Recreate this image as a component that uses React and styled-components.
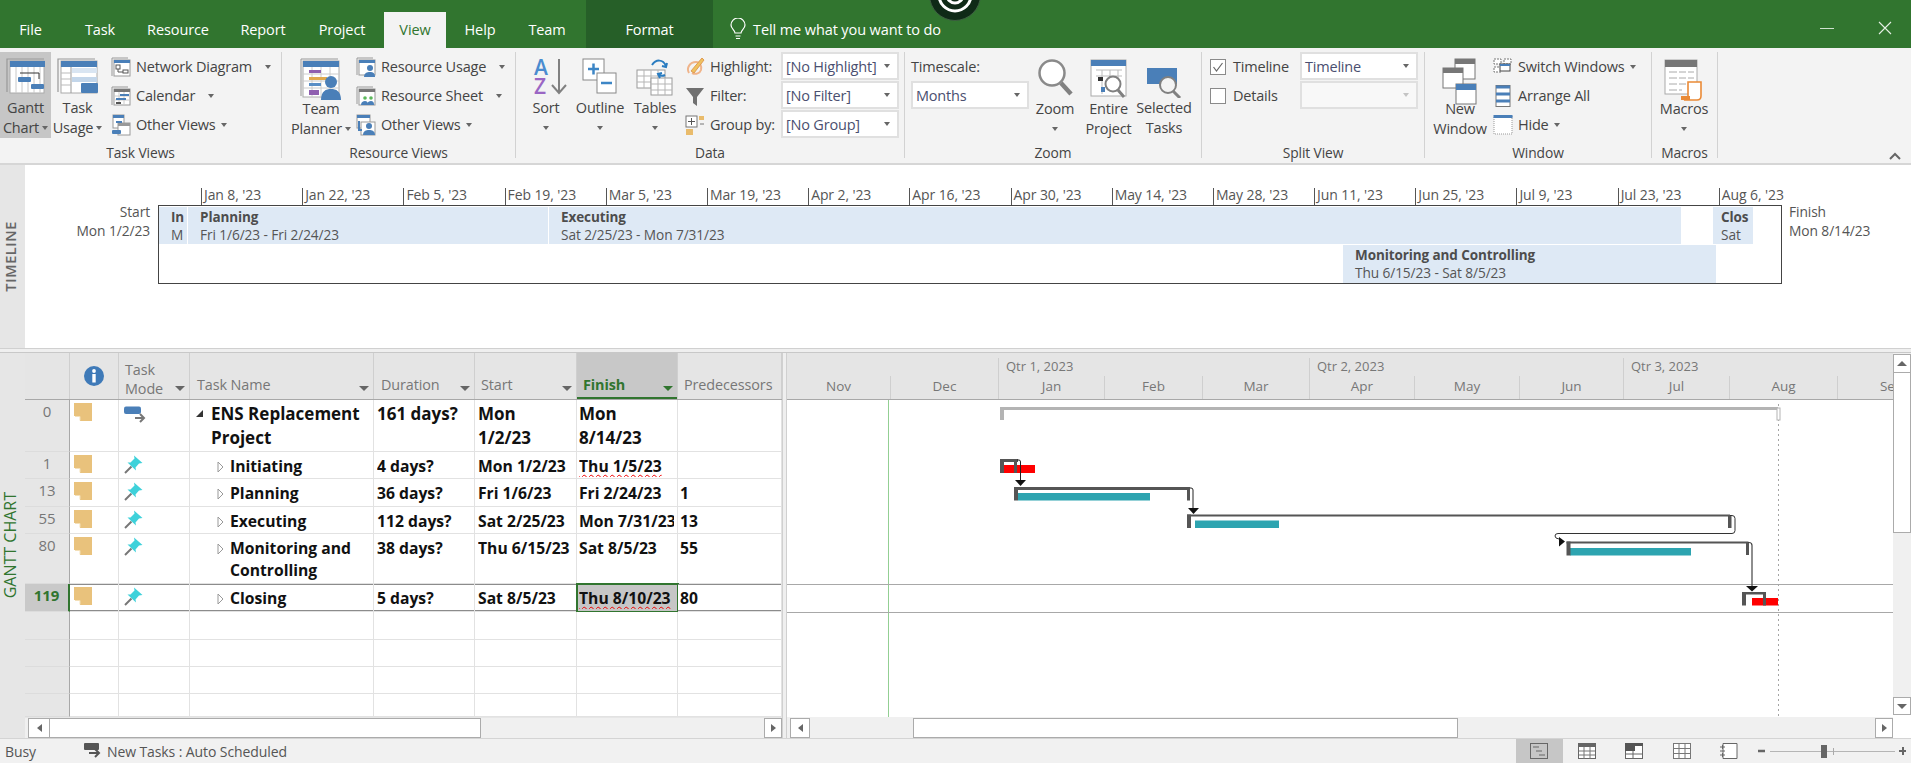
import React from "react";
import styled, { createGlobalStyle } from "styled-components";

const Global = createGlobalStyle`
  html, body { margin: 0; padding: 0; background: #fff; overflow: hidden; }
  body { font-family: "Open Sans", "Noto Sans", "Liberation Sans", sans-serif; color: #444; }
  * { box-sizing: border-box; }
`;

const Page = styled.div`
  width: 1911px; height: 763px; display: flex; flex-direction: column; overflow: hidden;
`;

/* ---------- title bar ---------- */
const TitleBar = styled.div`
  position: relative; height: 48px; flex: none; background: #31752f; display: flex; align-items: flex-end;
`;
const Tab = styled.div`
  width: ${p => p.$w}px; margin-right: ${p => p.$mr || 0}px; height: ${p => (p.$format ? 48 : 36)}px;
  display: flex; align-items: center; justify-content: center; padding-top: ${p => (p.$format ? 10 : 0)}px; padding-bottom: ${p => (p.$format ? 0 : 2)}px;
  font-size: 14.5px; letter-spacing: -.1px;
  color: ${p => (p.$active ? "#31752f" : "#fff")};
  background: ${p => (p.$active ? "#f3f3f3" : p.$format ? "#265f28" : "transparent")};
`;
const TellMe = styled.div`
  display: flex; align-items: center; gap: 7px; height: 36px; padding-bottom: 2px; margin-left: 17px; color: #fff; font-size: 14.5px; letter-spacing: -.1px;
`;
const WindowControls = styled.div`
  margin-left: auto; height: 40px; display: flex; align-items: center; padding-right: 19px; gap: 44px;
`;
const Logo = styled.svg`
  position: absolute; left: 929px; top: 0;
`;

/* ---------- ribbon ---------- */
const Ribbon = styled.div`
  height: 117px; flex: none; background: #f3f3f3; border-bottom: 2px solid #d6d6d6; display: flex; padding-top: 4px;
`;
const Group = styled.div`
  width: ${p => p.$w}px; height: 106px; flex: none; display: flex; flex-direction: column; border-right: 1px solid #d2d2d2;
`;
const GroupBody = styled.div`
  height: 92px; display: flex; padding-left: ${p => p.$pl || 0}px;
`;
const GroupLabel = styled.div`
  height: 14px; line-height: 18px; text-align: center; font-size: 13.8px; color: #444; letter-spacing: -.1px;
`;
const LargeButton = styled.div`
  width: ${p => p.$w}px; height: 86px; flex: none; display: flex; flex-direction: column; align-items: center;
  background: ${p => (p.$active ? "#c6c6c6" : "transparent")};
`;
const LargeIcon = styled.div`
  height: 47px; width: 100%; display: flex; align-items: flex-start; justify-content: center; padding-top: 6px;
`;
const LargeText = styled.div`
  font-size: 14.5px; line-height: 20px; height: 20px; white-space: nowrap; letter-spacing: -.2px; color: #444;
  display: flex; align-items: center; gap: 3px;
`;
const Caret = styled.span`
  display: inline-block; width: 0; height: 0; border-left: 3.5px solid transparent; border-right: 3.5px solid transparent;
  border-top: 4px solid ${p => p.$light ? "#c4c4c4" : "#666"}; margin-left: ${p => p.$ml || 0}px; flex: none;
`;
const SmallCol = styled.div`
  display: flex; flex-direction: column; margin-left: ${p => p.$ml || 0}px; flex: none;
`;
const SmallRow = styled.div`
  height: 29px; display: flex; align-items: center; gap: 5px; font-size: 14.5px; letter-spacing: -.2px; white-space: nowrap; color: #444;
`;
const IconSlot = styled.span`
  width: 20px; height: 22px; flex: none; display: flex; align-items: center; justify-content: center;
`;
const DataGrid = styled.div`
  display: grid; grid-template-columns: 96px 118px; grid-auto-rows: 29px; margin-left: 4px;
`;
const Combo = styled.div`
  width: 118px; height: 28px; background: ${p => (p.$disabled ? "#f8f8f8" : "#fff")}; border: 2px solid #e0e0e0;
  display: flex; align-items: center; justify-content: space-between; padding: 0 7px 0 3px;
  font-size: 14.5px; letter-spacing: -.2px; color: #4a4f70; white-space: nowrap;
`;
const ScaleCol = styled.div`
  width: 118px; margin-left: 6px; flex: none; display: flex; flex-direction: column;
`;
const ScaleLabel = styled.div`
  height: 29px; display: flex; align-items: center; font-size: 14.5px; letter-spacing: -.2px;
`;
const SplitCol = styled.div`
  display: grid; grid-template-columns: 90px 118px; grid-auto-rows: 29px; margin-left: 8px;
`;
const CheckRow = styled.div`
  display: flex; align-items: center; gap: 7px; font-size: 14.5px; letter-spacing: -.2px;
`;
const Check = styled.span`
  width: 16px; height: 16px; background: #fff; border: 1px solid #8a8a8a; display: flex; align-items: center; justify-content: center;
`;
const Collapse = styled.div`
  margin-left: auto; align-self: flex-end; padding: 0 10px 3px 0; height: 20px;
`;

/* ---------- timeline ---------- */
const TimelinePane = styled.div`
  height: 183px; flex: none; display: flex; background: #fff;
`;
const Strip = styled.div`
  width: 25px; flex: none; background: #e6e6e6; display: flex; align-items: center; justify-content: center; padding-right: ${p => p.$pr || 0}px;
`;
const StripText = styled.div`
  writing-mode: vertical-rl; transform: rotate(180deg); white-space: nowrap;
  font-size: ${p => (p.$green ? 16 : 14.5)}px;
  color: ${p => (p.$green ? "#31752f" : "#666")}; letter-spacing: ${p => (p.$green ? "0" : ".6px")};
  font-weight: ${p => (p.$green ? 400 : 600)};
`;
const TimelineEnd = styled.div`
  width: ${p => p.$w}px; flex: none; padding-top: 37px; font-size: 13.8px; line-height: 19px; color: #555; letter-spacing: -.1px;
  text-align: ${p => (p.$right ? "right" : "left")}; padding-right: ${p => (p.$right ? 8 : 0)}px; padding-left: ${p => (p.$right ? 0 : 7)}px;
`;
const TimelineCenter = styled.div`
  width: 1624px; flex: none; padding-top: 23px;
`;
const TimelineTicks = styled.div`
  display: flex; height: 17px; margin-left: 43px; width: 1500px;
`;
const Tick = styled.div`
  width: 101.2px; flex: none; border-left: 1px solid #555; padding-left: 2px; font-size: 14px; line-height: 13px; color: #555; white-space: nowrap; letter-spacing: -.1px;
`;
const TimelineBox = styled.div`
  height: 79px; border: 1px solid #444; background: #fff; padding: 1px 0 0 0; display: flex; flex-direction: column; gap: 1px;
`;
const TimelineRow = styled.div`
  display: flex; height: ${p => p.$h}px; gap: 1px; margin-left: ${p => p.$ml || 0}px;
`;
const Block = styled.div`
  width: ${p => p.$w}px; margin-left: ${p => p.$ml || 0}px; flex: none; background: #dee9f5; padding: 1px 0 0 ${p => p.$pl ?? 12}px; overflow: hidden;
  font-size: 13.7px; line-height: 18px; color: #555; white-space: nowrap; letter-spacing: -.1px;
`;
const BlockTitle = styled.div`
  font-weight: 700; color: #4d4d4d; font-size: 13.5px;
`;

const HSplit = styled.div`
  height: 5px; flex: none; background: #efefef; border-top: 1px solid #d0d0d0; border-bottom: 1px solid #c8c8c8;
`;

/* ---------- gantt view ---------- */
const GanttPane = styled.div`
  height: 385px; flex: none; display: flex;
`;
const TablePanel = styled.div`
  width: 757px; flex: none; display: flex; flex-direction: column; background: #fff;
`;
const COLS = "45px 49px 71px 184px 101px 102px 101px 104px";
const HeaderRow = styled.div`
  height: 47px; flex: none; display: grid; grid-template-columns: ${COLS}; background: #e5e5e5; border-bottom: 1px solid #a8a8a8;
`;
const HeadCell = styled.div`
  border-right: 1px solid #cfcfcf; padding: 0 4px ${p => p.$pb ?? 4}px ${p => p.$pl ?? 6}px; display: flex; align-items: flex-end; justify-content: space-between;
  font-size: 14.4px; line-height: ${p => p.$lh || 20}px; color: ${p => (p.$sel ? "#31752f" : "#777")}; font-weight: ${p => (p.$sel ? 700 : 400)};
  letter-spacing: -.1px;
  background: ${p => (p.$sel ? "#c8c8c8" : "transparent")};
  box-shadow: ${p => (p.$sel ? "inset 0 -2px 0 #31752f" : "none")};
`;
const InfoHead = styled(HeadCell)`
  justify-content: center; align-items: center; padding: 0;
`;
const HeadCaret = styled.span`
  width: 0; height: 0; border-left: 5px solid transparent; border-right: 5px solid transparent;
  border-top: 5px solid ${p => (p.$sel ? "#31752f" : "#666")}; margin-bottom: ${p => p.$mb ?? 4}px; flex: none;
`;
const Rows = styled.div`
  flex: 1; min-height: 0; overflow: hidden; background: #e6e6e6;
`;
const Row = styled.div`
  height: ${p => p.$h}px; display: grid; grid-template-columns: ${COLS};
`;
const IdCell = styled.div`
  background: ${p => (p.$sel ? "#c9c9c9" : "#e6e6e6")}; border-bottom: 1px solid #dcdcdc;
  border-right: ${p => (p.$sel ? "2px solid #31752f" : "1px solid #a8a8a8")};
  text-align: center; font-size: 15px; line-height: 23px; color: ${p => (p.$sel ? "#31752f" : "#777")}; font-weight: ${p => (p.$sel ? 700 : 400)};
`;
const Cell = styled.div`
  background: ${p => (p.$current ? "#c6c6c6" : "#fff")}; border-right: 1px solid #e2e2e2; border-bottom: 1px solid #e2e2e2;
  padding: ${p => (p.$big ? 2 : 3)}px 3px 0 ${p => p.$pl ?? 3}px;
  font-size: ${p => (p.$big ? 17 : 15.7)}px; font-weight: 700; line-height: ${p => (p.$big ? 24 : 22)}px; color: #111; min-width: 0;
  outline: ${p => (p.$current ? "2px solid #31752f" : "none")}; outline-offset: -1px;
  box-shadow: ${p => (p.$selrow ? "inset 0 -1px 0 #8c8c8c, inset 0 1px 0 #8c8c8c" : "none")};
`;
const Clip = styled.div`
  overflow: hidden; white-space: nowrap;
`;
const Squiggle = styled.span`
  text-decoration: underline wavy #f00000 1.2px; text-underline-offset: 2px; text-decoration-skip-ink: none;
`;
const NameCell = styled(Cell)`
  display: flex; align-items: flex-start; padding-left: ${p => p.$indent}px; padding-right: 6px;
`;
const Expander = styled.span`
  width: ${p => p.$w}px; flex: none; height: 23px; display: flex; align-items: center;
`;
const InfoCell = styled(Cell)`
  padding: 3px 0 0 4px; line-height: 0;
`;
const ModeCell = styled(Cell)`
  padding: 3px 0 0 5px; line-height: 0;
`;

const HScroll = styled.div`
  height: 21px; flex: none; display: flex; align-items: center; background: ${p => p.$plain ? "#e6e6e6" : "#f0f0f0"};
`;
const HBody = styled.div`
  flex: 1; height: 20px; display: flex; background: #f0f0f0; padding-left: 3px;
`;
const ScrollBtn = styled.div`
  width: ${p => p.$w || 18}px; height: ${p => p.$h || 20}px; flex: none; background: #fff; border: 1px solid #ababab; display: flex; align-items: center; justify-content: center;
`;
const Thumb = styled.div`
  width: ${p => p.$w}px; margin-left: ${p => p.$ml || 0}px; height: 20px; flex: none; background: #fff; border: 1px solid #ababab; border-left-width: ${p => p.$nl ? 0 : 1}px;
`;
const Spring = styled.div`
  flex: 1;
`;
const TriL = styled.span`
  width: 0; height: 0; border-top: 4.5px solid transparent; border-bottom: 4.5px solid transparent; border-right: 5px solid #666;
`;
const TriR = styled.span`
  width: 0; height: 0; border-top: 4.5px solid transparent; border-bottom: 4.5px solid transparent; border-left: 5px solid #666;
`;
const TriU = styled.span`
  width: 0; height: 0; border-left: 5px solid transparent; border-right: 5px solid transparent; border-bottom: 5px solid #666;
`;
const TriD = styled.span`
  width: 0; height: 0; border-left: 5px solid transparent; border-right: 5px solid transparent; border-top: 5px solid #666;
`;

const VSplit = styled.div`
  width: 5px; flex: none; background: #efefef; border-left: 1px solid #d0d0d0; border-right: 1px solid #d0d0d0;
`;
const ChartPanel = styled.div`
  width: 1106px; flex: none; display: flex; flex-direction: column; background: #fff;
`;
const Timescale = styled.div`
  height: 47px; flex: none; background: #e5e5e5; border-bottom: 1px solid #a8a8a8; overflow: hidden; display: flex; flex-direction: column;
`;
const QuarterRow = styled.div`
  height: 23px; display: flex; padding-top: 5px;
`;
const Quarter = styled.div`
  width: ${p => p.$w}px; flex: none; padding-left: 7px; font-size: 13px; line-height: 16px; color: #777;
  border-left: ${p => (p.$first ? "0" : "1px solid #cfcfcf")}; white-space: nowrap;
`;
const MonthRow = styled.div`
  height: 23px; display: flex;
`;
const Month = styled.div`
  width: ${p => p.$w}px; flex: none; text-align: center; font-size: 13.5px; line-height: 20px; color: #777;
  border-left: ${p => (p.$first ? "0" : "1px solid #cfcfcf")};
`;
const ChartBody = styled.div`
  flex: 1; min-height: 0; line-height: 0;
`;
const VScroll = styled.div`
  width: 18px; flex: none; display: flex; flex-direction: column; background: #f0f0f0; padding-top: 1px;
`;
const VThumb = styled.div`
  height: 160px; flex: none; background: #fff; border: 1px solid #ababab; border-top: 0;
`;
const Corner = styled.div`
  height: 23px; flex: none; background: #fff;
`;

/* ---------- status bar ---------- */
const StatusBar = styled.div`
  flex: 1; background: #f1f1f1; border-top: 1px solid #d4d4d4; display: flex; align-items: center; font-size: 14px; color: #555; letter-spacing: -.1px; padding-left: 5px;
`;
const Busy = styled.div`
  width: 79px; flex: none;
`;
const StatusNew = styled.div`
  display: flex; align-items: center; gap: 6px;
`;
const Views = styled.div`
  margin-left: auto; display: flex; height: 100%;
`;
const ViewBtn = styled.div`
  width: 47.5px; display: flex; align-items: center; justify-content: center; background: ${p => (p.$active ? "#c6c6c6" : "transparent")};
`;
const ZoomSlider = styled.div`
  width: 158px; flex: none; display: flex; align-items: center; padding-left: 3px; height: 100%;
`;

/* ---------- icons ---------- */
const BLUE = "#4a7fb8";
const GanttIcon = () => (
  <svg width="40" height="36" viewBox="0 0 40 36">
    <path d="M1 34V1h37" fill="none" stroke="#999" strokeWidth="1.2" />
    <rect x="4" y="3" width="34" height="32" fill="#fff" stroke="#aaa" />
    <rect x="4" y="3" width="35" height="6" fill={BLUE} />
    {[10, 16, 22, 28, 34].map(x => <path key={x} d="M0 9v26" transform={`translate(${x} 0)`} stroke="#c8c8c8" />)}
    <path d="M14 15h19v6" fill="none" stroke="#333" />
    <rect x="12" y="19" width="13" height="5" rx="1" fill={BLUE} />
    <rect x="25" y="26" width="13" height="5" rx="1" fill={BLUE} />
  </svg>
);
const UsageIcon = () => (
  <svg width="42" height="36" viewBox="0 0 42 36">
    <path d="M1 34V1h37" fill="none" stroke="#999" strokeWidth="1.2" />
    <rect x="4" y="3" width="36" height="32" fill="#fff" stroke="#aaa" />
    <rect x="4" y="3" width="36" height="6" fill={BLUE} />
    <path d="M14 9v26" stroke="#999" />
    <rect x="15" y="10" width="25" height="5" fill="#d9e5f2" />
    <rect x="15" y="19" width="25" height="5" fill="#c3d6ea" />
    <path d="M4 15h10M4 21h10M4 27h10" stroke="#bbb" />
    <rect x="24" y="25" width="17" height="10" rx="1" fill={BLUE} />
  </svg>
);
const TeamIcon = () => (
  <svg width="42" height="44" viewBox="0 0 42 44">
    <path d="M1 38V1h37" fill="none" stroke="#999" />
    <rect x="3" y="3" width="36" height="36" fill="#fff" stroke="#aaa" />
    <rect x="3" y="3" width="36" height="6" fill={BLUE} />
    <path d="M3 16h36M3 23h36M3 30h36M12 9v30M21 9v30M30 9v30" stroke="#ccc" />
    <rect x="9" y="12" width="12" height="3" fill="#8f5fb0" />
    <rect x="9" y="19" width="18" height="3" fill="#e0a94e" />
    <rect x="9" y="25" width="12" height="3" fill="#5a8fc6" />
    <rect x="9" y="32" width="10" height="5" fill="#8f5fb0" />
    <circle cx="31" cy="24" r="6" fill={BLUE} />
    <path d="M21 42c0-9 5-11 10-11s10 2 10 11z" fill={BLUE} />
  </svg>
);
const SortGlyphs = styled.div`
  position: relative; width: 42px; height: 40px; font-size: 21px; line-height: 19px; font-weight: 600;
`;
const SortLetter = styled.div`
  width: 26px; padding-left: 9px; height: 19px; color: ${p => p.$c};
`;
const SortArrow = styled.svg`
  position: absolute; right: 0; top: 0;
`;
const SortIcon = () => (
  <SortGlyphs>
    <SortLetter $c="#4a8cd0">A</SortLetter>
    <SortLetter $c="#9a66c4">Z</SortLetter>
    <SortArrow width="16" height="37" viewBox="0 0 16 37"><path d="M8 1v34M1 27l7 8 7-8" fill="none" stroke="#808080" strokeWidth="2" /></SortArrow>
  </SortGlyphs>
);
const OutlineIcon = () => (
  <svg width="36" height="36" viewBox="0 0 36 36">
    <rect x="1" y="1" width="21" height="21" fill="#fff" stroke="#888" />
    <path d="M6 11h11M11.500 5.500v11" stroke="#3d86c6" strokeWidth="2.500" />
    <rect x="15" y="15" width="19" height="20" fill="#fff" stroke="#888" />
    <path d="M19 25h11" stroke="#3d86c6" strokeWidth="2.500" />
  </svg>
);
const TablesIcon = () => (
  <svg width="38" height="38" viewBox="0 0 38 38">
    <rect x="1" y="12" width="28" height="18" fill="#fff" stroke="#9a9a9a" />
    <path d="M1 18h28M1 24h28M8 12v18M15 12v18M22 12v18" stroke="#b5b5b5" />
    <rect x="15" y="20" width="21" height="17" fill="#fff" stroke="#9a9a9a" />
    <path d="M15 26h21M15 32h21M22 20v17M29 20v17" stroke="#b5b5b5" />
    <path d="M16 7c4-6 11-6 14 1M31 5l-1 4-4-1M29 17c-2 1-5 1-7-1M24 20l-2-4 4-1" fill="none" stroke="#2a7cc0" strokeWidth="2" />
  </svg>
);
const ZoomIcon = () => (
  <svg width="36" height="42" viewBox="0 0 36 42">
    <circle cx="15" cy="15" r="12.500" fill="#fff" stroke="#8a8a8a" strokeWidth="2.500" />
    <path d="M24 25l10 11" stroke="#808080" strokeWidth="4.500" />
  </svg>
);
const EntireIcon = () => (
  <svg width="38" height="42" viewBox="0 0 38 42">
    <rect x="1" y="2" width="35" height="36" fill="#fff" stroke="#aaa" />
    <rect x="1" y="2" width="35" height="6" fill={BLUE} />
    <path d="M6 12h26M6 18h26M12 12v24M20 12v10M28 12v10" stroke="#bbb" />
    <rect x="8" y="19" width="5" height="4" fill="#333" />
    <rect x="11" y="29" width="4" height="5" fill={BLUE} />
    <circle cx="23" cy="26" r="7.500" fill="#fff" stroke="#808080" strokeWidth="2" />
    <path d="M28 32l6 7" stroke="#808080" strokeWidth="3" />
  </svg>
);
const SelectedIcon = () => (
  <svg width="38" height="40" viewBox="0 0 38 40">
    <rect x="2" y="10" width="30" height="16" fill={BLUE} />
    <circle cx="23" cy="27" r="8" fill="#f3f3f3" stroke="#808080" strokeWidth="2" />
    <path d="M28 33l7 7" stroke="#808080" strokeWidth="3" />
  </svg>
);
const NewWinIcon = () => (
  <svg width="36" height="48" viewBox="0 0 36 48">
    <rect x="13" y="1" width="20" height="20" fill="#fff" stroke="#777" />
    <rect x="13" y="1" width="20" height="5" fill="#777" />
    <rect x="1" y="10" width="20" height="20" fill="#fff" stroke="#777" />
    <rect x="1" y="10" width="20" height="5" fill="#777" />
    <rect x="14" y="26" width="20" height="20" fill="#fff" stroke="#777" />
    <rect x="14" y="26" width="20" height="6" fill={BLUE} />
  </svg>
);
const MacroIcon = () => (
  <svg width="40" height="44" viewBox="0 0 40 44">
    <rect x="1" y="2" width="32" height="34" fill="#fff" stroke="#aaa" />
    <rect x="1" y="2" width="32" height="7" fill="#777" />
    <path d="M5 14h8M15 14h7M24 14h6M5 20h8M15 20h7M24 20h6M5 26h8M15 26h7M5 32h8M15 32h3" stroke="#aaa" />
    <path d="M24 24h13v14c0 3-1 4-4 4H20c2-1 4-1 4-4z" fill="#fff" stroke="#ea8a36" strokeWidth="1.600" />
    <rect x="17" y="38" width="9" height="4" fill="#ea8a36" />
  </svg>
);
const small = (children) => <svg width="20" height="22" viewBox="0 0 20 22">{children}</svg>;
const NetworkIcon = () => small(<>
  <path d="M1 20V2h16" fill="none" stroke="#999" />
  <rect x="3" y="4" width="16" height="16" fill="#fff" stroke="#999" />
  <rect x="3" y="4" width="16" height="3" fill={BLUE} />
  <rect x="5" y="9" width="4" height="4" fill="#fff" stroke="#555" />
  <rect x="12" y="14" width="5" height="3" fill="#fff" stroke="#555" />
  <path d="M7 13v3h5" fill="none" stroke="#555" />
</>);
const CalendarIcon = () => small(<>
  <path d="M1 20V2h16" fill="none" stroke="#999" />
  <rect x="3" y="4" width="16" height="16" fill="#fff" stroke="#999" />
  <rect x="3" y="4" width="16" height="3" fill="#777" />
  <path d="M3 11h16M3 15h16M8 7v13M13 7v13" stroke="#ccc" />
  <rect x="9" y="9" width="9" height="2" fill={BLUE} />
  <rect x="5" y="13" width="10" height="2" fill={BLUE} />
  <rect x="5" y="17" width="5" height="2" fill="#555" />
</>);
const OtherViewsIcon = () => small(<>
  <rect x="2" y="1" width="11" height="13" fill="#fff" stroke="#999" />
  <rect x="2" y="1" width="11" height="3" fill={BLUE} />
  <rect x="7" y="9" width="12" height="12" fill="#fff" stroke="#999" />
  <rect x="7" y="9" width="12" height="3" fill="#999" />
  <rect x="1" y="16" width="9" height="4" rx="1" fill={BLUE} />
  <rect x="5" y="7" width="6" height="2" fill={BLUE} />
</>);
const ResUsageIcon = () => small(<>
  <path d="M1 19V2h16" fill="none" stroke="#999" />
  <rect x="3" y="4" width="16" height="15" fill="#fff" stroke="#999" />
  <rect x="3" y="4" width="16" height="3" fill={BLUE} />
  <circle cx="14" cy="12" r="3" fill={BLUE} />
  <path d="M8 21c0-4 3-5 6-5s5 1 5 5z" fill={BLUE} />
</>);
const ResSheetIcon = () => small(<>
  <path d="M1 19V2h16" fill="none" stroke="#999" />
  <rect x="3" y="4" width="16" height="16" fill="#fff" stroke="#999" />
  <rect x="3" y="4" width="16" height="3" fill="#777" />
  <circle cx="9" cy="13" r="1.800" fill="#5cb85c" />
  <circle cx="15" cy="13" r="1.800" fill="#5cb85c" />
  <path d="M5 20c0-3 2-4 4-4s3 1 3 4z" fill={BLUE} />
  <path d="M11 20c0-3 2-4 4-4s3 1 3 4z" fill={BLUE} />
</>);
const ResOtherIcon = () => small(<>
  <rect x="1" y="1" width="13" height="13" fill="#fff" stroke="#999" />
  <rect x="1" y="1" width="13" height="3" fill={BLUE} />
  <rect x="5" y="8" width="14" height="13" fill="#fff" stroke="#999" />
  <circle cx="13" cy="12" r="3" fill={BLUE} />
  <path d="M7 21c0-4 3-5 6-5s6 1 6 5z" fill={BLUE} />
  <path d="M3 7v9h3" fill="none" stroke={BLUE} strokeWidth="2" />
</>);
const HighlightIcon = () => small(<>
  <path d="M4 17C1 12 5 6 11 6c4 0 6 4 5 8-1 3-5 5-9 3" fill="none" stroke="#f0b48a" strokeWidth="2" />
  <path d="M6 15L17 2l2 2L9 17z" fill="#efc25e" stroke="#e09a52" />
</>);
const FilterIcon = () => small(<path d="M1 3h18l-7 9v9l-4-3v-6z" fill="#707070" />);
const GroupIcon = () => small(<>
  <rect x="1" y="2" width="11" height="11" fill="#fff" stroke="#777" />
  <path d="M3 7.500h7M6.500 4v7" stroke="#555" />
  <rect x="14" y="2" width="5" height="4" fill="#e9bb6b" />
  <path d="M15 10h4" stroke="#777" />
  <rect x="1" y="15" width="7" height="6" fill="#e9bb6b" />
</>);
const SwitchIcon = () => small(<>
  <path d="M1 3h7v5H1zM11 3h7v5h-7zM1 11h7v5H1z" fill="#fff" stroke="#777" strokeDasharray="2 1" />
  <rect x="7" y="8" width="10" height="7" fill="#fff" stroke="#444" />
  <rect x="7" y="8" width="10" height="2" fill={BLUE} />
</>);
const ArrangeIcon = () => small(<>
  <rect x="3" y="0.500" width="14" height="21" fill="#fff" stroke="#777" />
  <rect x="3" y="0.500" width="14" height="3" fill={BLUE} />
  <rect x="3" y="7.500" width="14" height="3" fill={BLUE} />
  <rect x="3" y="14.500" width="14" height="3" fill={BLUE} />
</>);
const HideIcon = () => small(<>
  <rect x="1" y="2" width="18" height="18" fill="#fff" stroke="#999" strokeDasharray="1 1" />
  <rect x="0.500" y="1" width="19" height="3" fill={BLUE} />
</>);
const NoteIcon = () => (
  <svg width="18" height="18" viewBox="0 0 18 18">
    <path d="M0 0h18v18H6V13H0z" fill="#e9c27c" />
    <path d="M1 13.500h5v4" fill="none" stroke="#f4e0b8" />
  </svg>
);
const PinIcon = () => (
  <svg width="19" height="19" viewBox="0 0 19 19">
    <path d="M1 18l6.500-6.500" stroke="#777" strokeWidth="2" />
    <path d="M10 .5l8.500 7.500-3.500.5-3.500 4 .5 3-8.500-8h3l4-4z" fill="#3ed1da" />
  </svg>
);
const AutoIcon = () => (
  <svg width="22" height="21" viewBox="0 0 22 21">
    <rect x="0" y="3.500" width="17" height="7.500" rx="2" fill={BLUE} />
    <path d="M11 15h9M16 11l4 4-4 4" fill="none" stroke="#777" strokeWidth="2" />
  </svg>
);
const ExpandOpen = () => <svg width="7" height="7" viewBox="0 0 7 7"><path d="M7 0v7H0z" fill="#333" /></svg>;
const ExpandClosed = () => <svg width="7" height="12" viewBox="0 0 7 12"><path d="M1 1l5 5-5 5z" fill="#fff" stroke="#999" /></svg>;
const InfoIcon = () => (
  <svg width="20" height="20" viewBox="0 0 20 20">
    <circle cx="10" cy="10" r="10" fill="#3f7ab8" />
    <circle cx="10" cy="5" r="1.900" fill="#fff" />
    <rect x="8.300" y="8" width="3.400" height="8.500" fill="#fff" />
  </svg>
);
const StatusAuto = () => (
  <svg width="17" height="16" viewBox="0 0 17 16">
    <rect x="0" y="0" width="15" height="7" rx="1" fill="#555" />
    <path d="M5 10h10M11 6l4 4-4 4" fill="none" stroke="#555" strokeWidth="2" />
  </svg>
);
const viewFrame = (children) => <svg width="18" height="16" viewBox="0 0 18 16">{children}</svg>;

/* ---------- gantt drawing ---------- */
const D = "#555";
const GanttDrawing = () => (
  <svg width="1106" height="317" viewBox="787 400 1106 317">
    <path d="M888.500 400v317" stroke="#93cf93" />
    <path d="M787 584.500h1106M787 612.500h1106" stroke="#a8a8a8" />
    <path d="M1778.500 404v313" stroke="#a5a5a5" strokeDasharray="2 3" />
    <rect x="1000" y="407" width="778" height="3" fill="#b4b4b4" />
    <rect x="1000" y="407" width="4" height="13" fill="#b4b4b4" />
    <rect x="1777" y="408" width="3" height="12" fill="#fff" stroke="#b4b4b4" />
    <rect x="1004" y="465" width="31" height="8" fill="#ff0000" />
    <rect x="1000" y="459" width="18" height="3" fill={D} />
    <rect x="1000" y="459" width="4" height="14" fill={D} />
    <rect x="1014" y="459" width="3" height="14" fill={D} />
    <path d="M1017 460h2q1.500 0 1.500 2v19" fill="none" stroke="#222" />
    <path d="M1015 480h11l-5.500 6z" fill="#111" />
    <rect x="1018" y="493" width="132" height="7.500" fill="#2da4b0" />
    <rect x="1014" y="487" width="176" height="3" fill={D} />
    <rect x="1014" y="487" width="4" height="13.500" fill={D} />
    <rect x="1187" y="487" width="3" height="13.500" fill={D} />
    <path d="M1190 488h1q2 0 2 2v19" fill="none" stroke="#222" />
    <path d="M1188 508h11l-5.500 6z" fill="#111" />
    <rect x="1195" y="520.500" width="84" height="7.500" fill="#2da4b0" />
    <rect x="1187" y="514.500" width="543" height="2" fill={D} />
    <rect x="1187" y="514.500" width="4" height="13.500" fill={D} />
    <rect x="1728" y="515" width="3.500" height="13" fill={D} />
    <path d="M1730 515.500h2q3 0 3 3v12q0 3-3 3h-174q-3 0-3 2.500t4 3" fill="none" stroke="#333" />
    <path d="M1559 537l6 4.500-6 5z" fill="#111" />
    <rect x="1570" y="548" width="121" height="7.500" fill="#2da4b0" />
    <rect x="1566.500" y="541.500" width="182" height="2" fill={D} />
    <rect x="1566.500" y="541.500" width="4" height="14" fill={D} />
    <rect x="1746" y="542" width="3" height="13" fill={D} />
    <path d="M1748 542.500h1q3 0 3 3v42" fill="none" stroke="#444" strokeWidth="1.200" />
    <path d="M1746 586h12l-6 5.500z" fill="#111" />
    <rect x="1752" y="598" width="26" height="7.500" fill="#ff0000" />
    <rect x="1742" y="592" width="24" height="2.500" fill={D} />
    <rect x="1742" y="592" width="4" height="13.500" fill={D} />
    <rect x="1763" y="592" width="3" height="13.500" fill={D} />
  </svg>
);

const Ln = ({ children, caret }) => <LargeText>{children}{caret && <Caret />}</LargeText>;

const rows = [
  { id: "0", h: 52, top: true, name: "ENS Replacement Project", dur: "161 days?", start: <>Mon<br />1/2/23</>, finish: <>Mon<br />8/14/23</>, pred: "" },
  { id: "1", h: 27, name: "Initiating", dur: "4 days?", start: "Mon 1/2/23", finish: <Squiggle>Thu 1/5/23</Squiggle>, pred: "" },
  { id: "13", h: 28, name: "Planning", dur: "36 days?", start: "Fri 1/6/23", finish: "Fri 2/24/23", pred: "1" },
  { id: "55", h: 27, name: "Executing", dur: "112 days?", start: "Sat 2/25/23", finish: "Mon 7/31/23", pred: "13" },
  { id: "80", h: 50, name: "Monitoring and Controlling", dur: "38 days?", start: "Thu 6/15/23", finish: "Sat 8/5/23", pred: "55" },
  { id: "119", h: 28, sel: true, name: "Closing", dur: "5 days?", start: "Sat 8/5/23", finish: <Squiggle>Thu 8/10/23</Squiggle>, pred: "80" },
];
const ticks = ["Jan 8, '23","Jan 22, '23","Feb 5, '23","Feb 19, '23","Mar 5, '23","Mar 19, '23","Apr 2, '23","Apr 16, '23","Apr 30, '23","May 14, '23","May 28, '23","Jun 11, '23","Jun 25, '23","Jul 9, '23","Jul 23, '23","Aug 6, '23"];
const months = [["Nov",103],["Dec",108],["Jan",106],["Feb",98],["Mar",107],["Apr",105],["May",105],["Jun",104],["Jul",106],["Aug",108],["Sep",108]];
const EMPTY = [28, 27, 27, 23];

export default function App() {
  return (
    <Page>
      <Global />
      <TitleBar>
        <Tab $w={61}>File</Tab>
        <Tab $w={78}>Task</Tab>
        <Tab $w={78}>Resource</Tab>
        <Tab $w={92}>Report</Tab>
        <Tab $w={66} $mr={9}>Project</Tab>
        <Tab $w={62} $active>View</Tab>
        <Tab $w={68}>Help</Tab>
        <Tab $w={66} $mr={6}>Team</Tab>
        <Tab $w={127} $format>Format</Tab>
        <TellMe>
          <svg width="16" height="22" viewBox="0 0 16 22"><path d="M5 15c0-3-4-4-4-8a7 7 0 0114 0c0 4-4 5-4 8zM5.500 18h5M6 20.500h4" fill="none" stroke="#fff" strokeWidth="1.200" /></svg>
          Tell me what you want to do
        </TellMe>
        <WindowControls>
          <svg width="14" height="14" viewBox="0 0 14 14"><path d="M0 7.500h14" stroke="#cfe2cf" /></svg>
          <svg width="14" height="14" viewBox="0 0 14 14"><path d="M1 1l12 12M13 1L1 13" stroke="#e6f0e6" strokeWidth="1.100" /></svg>
        </WindowControls>
        <Logo width="52" height="21" viewBox="0 0 52 21">
          <circle cx="26" cy="-5" r="25.500" fill="#0f2a17" stroke="#3d5f41" />
          <circle cx="26" cy="-5" r="16" fill="none" stroke="#fff" strokeWidth="3" />
          <circle cx="26" cy="-5" r="8" fill="none" stroke="#fff" strokeWidth="3" />
        </Logo>
      </TitleBar>

      <Ribbon>
        <Group $w={282}>
          <GroupBody>
            <LargeButton $w={51} $active><LargeIcon><GanttIcon /></LargeIcon><Ln>Gantt</Ln><Ln caret>Chart</Ln></LargeButton>
            <LargeButton $w={53}><LargeIcon><UsageIcon /></LargeIcon><Ln>Task</Ln><Ln caret>Usage</Ln></LargeButton>
            <SmallCol $ml={7}>
              <SmallRow><IconSlot><NetworkIcon /></IconSlot>Network Diagram<Caret $ml={8} /></SmallRow>
              <SmallRow><IconSlot><CalendarIcon /></IconSlot>Calendar<Caret $ml={8} /></SmallRow>
              <SmallRow><IconSlot><OtherViewsIcon /></IconSlot>Other Views<Caret /></SmallRow>
            </SmallCol>
          </GroupBody>
          <GroupLabel>Task Views</GroupLabel>
        </Group>
        <Group $w={234}>
          <GroupBody $pl={8}>
            <LargeButton $w={62}><LargeIcon><TeamIcon /></LargeIcon><Ln>Team</Ln><Ln caret>Planner</Ln></LargeButton>
            <SmallCol $ml={4}>
              <SmallRow><IconSlot><ResUsageIcon /></IconSlot>Resource Usage<Caret $ml={8} /></SmallRow>
              <SmallRow><IconSlot><ResSheetIcon /></IconSlot>Resource Sheet<Caret $ml={8} /></SmallRow>
              <SmallRow><IconSlot><ResOtherIcon /></IconSlot>Other Views<Caret /></SmallRow>
            </SmallCol>
          </GroupBody>
          <GroupLabel>Resource Views</GroupLabel>
        </Group>
        <Group $w={389}>
          <GroupBody $pl={5}>
            <LargeButton $w={50}><LargeIcon><SortIcon /></LargeIcon><Ln>Sort</Ln><Ln><Caret /></Ln></LargeButton>
            <LargeButton $w={58}><LargeIcon><OutlineIcon /></LargeIcon><Ln>Outline</Ln><Ln><Caret /></Ln></LargeButton>
            <LargeButton $w={52}><LargeIcon><TablesIcon /></LargeIcon><Ln>Tables</Ln><Ln><Caret /></Ln></LargeButton>
            <DataGrid>
              <SmallRow><IconSlot><HighlightIcon /></IconSlot>Highlight:</SmallRow>
              <Combo>[No Highlight]<Caret /></Combo>
              <SmallRow><IconSlot><FilterIcon /></IconSlot>Filter:</SmallRow>
              <Combo>[No Filter]<Caret /></Combo>
              <SmallRow><IconSlot><GroupIcon /></IconSlot>Group by:</SmallRow>
              <Combo>[No Group]<Caret /></Combo>
            </DataGrid>
          </GroupBody>
          <GroupLabel>Data</GroupLabel>
        </Group>
        <Group $w={297}>
          <GroupBody>
            <ScaleCol>
              <ScaleLabel>Timescale:</ScaleLabel>
              <Combo>Months<Caret /></Combo>
            </ScaleCol>
            <LargeButton $w={52}><LargeIcon><ZoomIcon /></LargeIcon><Ln>Zoom</Ln><Ln><Caret /></Ln></LargeButton>
            <LargeButton $w={55}><LargeIcon><EntireIcon /></LargeIcon><Ln>Entire</Ln><Ln>Project</Ln></LargeButton>
            <LargeButton $w={56}><LargeIcon><SelectedIcon /></LargeIcon><Ln>Selected</Ln><Ln>Tasks</Ln></LargeButton>
          </GroupBody>
          <GroupLabel>Zoom</GroupLabel>
        </Group>
        <Group $w={223}>
          <GroupBody>
            <SplitCol>
              <CheckRow><Check><svg width="12" height="12" viewBox="0 0 12 12"><path d="M1.500 6l3 4 6-8" fill="none" stroke="#666" strokeWidth="1.200" /></svg></Check>Timeline</CheckRow>
              <Combo>Timeline<Caret /></Combo>
              <CheckRow><Check />Details</CheckRow>
              <Combo $disabled><span /><Caret $light /></Combo>
            </SplitCol>
          </GroupBody>
          <GroupLabel>Split View</GroupLabel>
        </Group>
        <Group $w={227}>
          <GroupBody $pl={8}>
            <LargeButton $w={54}><LargeIcon><NewWinIcon /></LargeIcon><Ln>New</Ln><Ln>Window</Ln></LargeButton>
            <SmallCol $ml={6}>
              <SmallRow><IconSlot><SwitchIcon /></IconSlot>Switch Windows<Caret /></SmallRow>
              <SmallRow><IconSlot><ArrangeIcon /></IconSlot>Arrange All</SmallRow>
              <SmallRow><IconSlot><HideIcon /></IconSlot>Hide<Caret /></SmallRow>
            </SmallCol>
          </GroupBody>
          <GroupLabel>Window</GroupLabel>
        </Group>
        <Group $w={66}>
          <GroupBody $pl={1}>
            <LargeButton $w={62}><LargeIcon><MacroIcon /></LargeIcon><Ln>Macros</Ln><Ln><Caret /></Ln></LargeButton>
          </GroupBody>
          <GroupLabel>Macros</GroupLabel>
        </Group>
        <Collapse>
          <svg width="12" height="8" viewBox="0 0 12 8"><path d="M1 7l5-5 5 5" fill="none" stroke="#666" strokeWidth="2" /></svg>
        </Collapse>
      </Ribbon>

      <TimelinePane>
        <Strip $pr={5}><StripText>TIMELINE</StripText></Strip>
        <TimelineEnd $w={133} $right>Start<br />Mon 1/2/23</TimelineEnd>
        <TimelineCenter>
          <TimelineTicks>
            {ticks.map(t => <Tick key={t}>{t}</Tick>)}
          </TimelineTicks>
          <TimelineBox>
            <TimelineRow $h={37}>
              <Block $w={28}><BlockTitle>In</BlockTitle>M</Block>
              <Block $w={360}><BlockTitle>Planning</BlockTitle>Fri 1/6/23 - Fri 2/24/23</Block>
              <Block $w={1132}><BlockTitle>Executing</BlockTitle>Sat 2/25/23 - Mon 7/31/23</Block>
              <Block $w={40} $ml={31} $pl={8}><BlockTitle>Clos</BlockTitle>Sat</Block>
            </TimelineRow>
            <TimelineRow $h={38} $ml={1184}>
              <Block $w={373}><BlockTitle>Monitoring and Controlling</BlockTitle>Thu 6/15/23 - Sat 8/5/23</Block>
            </TimelineRow>
          </TimelineBox>
        </TimelineCenter>
        <TimelineEnd $w={129}>Finish<br />Mon 8/14/23</TimelineEnd>
      </TimelinePane>
      <HSplit />

      <GanttPane>
        <Strip $pr={5}><StripText $green>GANTT CHART</StripText></Strip>
        <TablePanel>
          <HeaderRow>
            <HeadCell />
            <InfoHead><InfoIcon /></InfoHead>
            <HeadCell $pb={1} $lh={19}><span>Task<br />Mode</span><HeadCaret $mb={7} /></HeadCell>
            <HeadCell $pl={7}>Task Name<HeadCaret /></HeadCell>
            <HeadCell $pl={7}>Duration<HeadCaret /></HeadCell>
            <HeadCell>Start<HeadCaret /></HeadCell>
            <HeadCell $sel>Finish<HeadCaret $sel /></HeadCell>
            <HeadCell>Predecessors</HeadCell>
          </HeaderRow>
          <Rows>
            {rows.map(r => (
              <Row key={r.id} $h={r.h}>
                <IdCell $sel={r.sel}>{r.id}</IdCell>
                <InfoCell $selrow={r.sel}><NoteIcon /></InfoCell>
                <ModeCell $selrow={r.sel}>{r.top ? <AutoIcon /> : <PinIcon />}</ModeCell>
                <NameCell $indent={r.top ? 6 : 27} $selrow={r.sel} $big={r.top}>
                  <Expander $w={r.top ? 15 : 13}>{r.top ? <ExpandOpen /> : <ExpandClosed />}</Expander>
                  <span>{r.name}</span>
                </NameCell>
                <Cell $selrow={r.sel} $big={r.top}><Clip>{r.dur}</Clip></Cell>
                <Cell $pl={3} $selrow={r.sel} $big={r.top}><Clip>{r.start}</Clip></Cell>
                <Cell $pl={2} $current={r.sel} $big={r.top}><Clip>{r.finish}</Clip></Cell>
                <Cell $pl={2} $selrow={r.sel}><Clip>{r.pred}</Clip></Cell>
              </Row>
            ))}
            {EMPTY.map((h, i) => (
              <Row key={i} $h={h}>
                <IdCell />
                {[0, 1, 2, 3, 4, 5, 6].map(c => <Cell key={c} />)}
              </Row>
            ))}
          </Rows>
          <HScroll $plain>
            <HBody>
              <ScrollBtn $w={22}><TriL /></ScrollBtn>
              <Thumb $w={431} $nl />
              <Spring />
              <ScrollBtn><TriR /></ScrollBtn>
            </HBody>
          </HScroll>
        </TablePanel>
        <VSplit />
        <ChartPanel>
          <Timescale>
            <QuarterRow>
              <Quarter $w={211} $first />
              <Quarter $w={311}>Qtr 1, 2023</Quarter>
              <Quarter $w={314}>Qtr 2, 2023</Quarter>
              <Quarter $w={270}>Qtr 3, 2023</Quarter>
            </QuarterRow>
            <MonthRow>
              {months.map(([m, w], i) => <Month key={m} $w={w} $first={i === 0}>{m}</Month>)}
            </MonthRow>
          </Timescale>
          <ChartBody><GanttDrawing /></ChartBody>
          <HScroll>
            <HBody>
              <ScrollBtn $w={20}><TriL /></ScrollBtn>
              <Thumb $w={545} $ml={103} />
              <Spring />
              <ScrollBtn><TriR /></ScrollBtn>
            </HBody>
          </HScroll>
        </ChartPanel>
        <VScroll>
          <ScrollBtn $h={19}><TriU /></ScrollBtn>
          <VThumb />
          <Spring />
          <ScrollBtn $h={18}><TriD /></ScrollBtn>
          <Corner />
        </VScroll>
      </GanttPane>

      <StatusBar>
        <Busy>Busy</Busy>
        <StatusNew><StatusAuto />New Tasks : Auto Scheduled</StatusNew>
        <Views>
          <ViewBtn $active>{viewFrame(<><rect x=".5" y=".5" width="17" height="15" fill="none" stroke="#666" /><path d="M3 4h6M6 8h6M9 12h6" stroke="#666" /></>)}</ViewBtn>
          <ViewBtn>{viewFrame(<><rect x=".5" y=".5" width="17" height="15" fill="#fff" stroke="#666" /><rect x="0" y="0" width="18" height="4" fill="#666" /><path d="M6 4v12M12 4v12M1 8h16M1 12h16" stroke="#777" /></>)}</ViewBtn>
          <ViewBtn>{viewFrame(<><rect x=".5" y=".5" width="17" height="15" fill="#fff" stroke="#666" /><rect x="0" y="0" width="10" height="8" fill="#555" /><rect x="10" y="0" width="8" height="3" fill="#555" /><path d="M1 11h16" stroke="#666" /><path d="M8 8v8" stroke="#666" /></>)}</ViewBtn>
          <ViewBtn>{viewFrame(<><rect x=".5" y=".5" width="17" height="15" fill="#fff" stroke="#777" /><path d="M6 0v16M12 0v16M0 5.500h18M0 10.500h18" stroke="#777" /></>)}</ViewBtn>
          <ViewBtn>{viewFrame(<><path d="M3 .500h14v15H3z" fill="#fff" stroke="#666" /><path d="M0 4h5M0 8h5M0 12h5M2.500 2v4M2.500 10v4" stroke="#666" /></>)}</ViewBtn>
        </Views>
        <ZoomSlider>
          <svg width="150" height="18" viewBox="0 0 150 18">
            <path d="M2 9h7" stroke="#666" strokeWidth="2.500" />
            <path d="M14 9.500h125" stroke="#b5b5b5" />
            <rect x="65" y="3" width="6" height="13" fill="#666" />
            <path d="M77.500 6v7" stroke="#aaa" />
            <path d="M143 9h8M147 5v8" stroke="#666" strokeWidth="2" />
          </svg>
        </ZoomSlider>
      </StatusBar>
    </Page>
  );
}
